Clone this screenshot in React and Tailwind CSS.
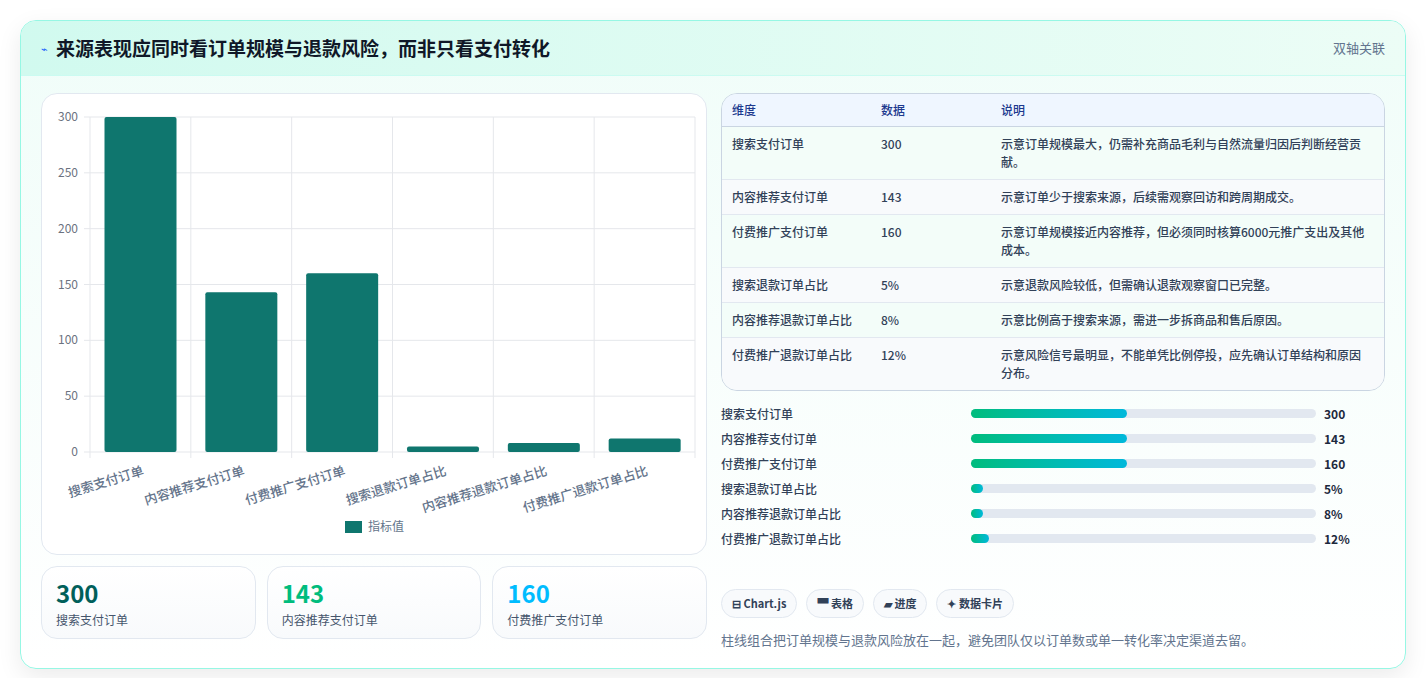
const rows = [
  ["搜索支付订单", "300", "示意订单规模最大，仍需补充商品毛利与自然流量归因后判断经营贡献。"],
  ["内容推荐支付订单", "143", "示意订单少于搜索来源，后续需观察回访和跨周期成交。"],
  ["付费推广支付订单", "160", "示意订单规模接近内容推荐，但必须同时核算6000元推广支出及其他成本。"],
  ["搜索退款订单占比", "5%", "示意退款风险较低，但需确认退款观察窗口已完整。"],
  ["内容推荐退款订单占比", "8%", "示意比例高于搜索来源，需进一步拆商品和售后原因。"],
  ["付费推广退款订单占比", "12%", "示意风险信号最明显，不能单凭比例停投，应先确认订单结构和原因分布。"],
];
const bars = [
  { label: "搜索支付订单", v: 300, w: 156 },
  { label: "内容推荐支付订单", v: 143, w: 156 },
  { label: "付费推广支付订单", v: 160, w: 156 },
  { label: "搜索退款订单占比", v: "5%", w: 12 },
  { label: "内容推荐退款订单占比", v: "8%", w: 12 },
  { label: "付费推广退款订单占比", v: "12%", w: 18 },
];
const values = [300, 143, 160, 5, 8, 12];

function Chart() {
  const x0 = 48, x1 = 653, y0 = 23, y1 = 358;
  const step = (x1 - x0) / 6;
  const sy = (v) => y1 - (v / 300) * (y1 - y0);
  return (
    <svg width="666" height="462" className="block">
      {[0, 50, 100, 150, 200, 250, 300].map((t) => (
        <g key={t}>
          <line x1={x0 - 6} x2={x1} y1={sy(t)} y2={sy(t)} stroke="#e5e7eb" />
          <text x={x0 - 12} y={sy(t) + 4} textAnchor="end" fontSize="12" fill="#6b7280">{t}</text>
        </g>
      ))}
      {[0, 1, 2, 3, 4, 5, 6].map((i) => (
        <line key={i} x1={x0 + i * step} x2={x0 + i * step} y1={y0} y2={y1 + 6} stroke="#e5e7eb" />
      ))}
      {values.map((v, i) => (
        <rect key={i} x={x0 + i * step + 14.5} y={sy(v)} width="72" height={y1 - sy(v)} rx="2" fill="#0f766e" />
      ))}
      {bars.map((b, i) => (
        <text key={i} fontSize="13" fontWeight="500" fill="#64748b" textAnchor="end"
          transform={`translate(${x0 + i * step + 52},${y1 + 14}) rotate(-17)`} dy="9">{b.label}</text>
      ))}
      <rect x="303" y="427" width="17" height="12" fill="#0f766e" />
      <text x="326" y="437" fontSize="12" fill="#64748b">指标值</text>
    </svg>
  );
}

export default function App() {
  return (
    <div className="min-h-screen bg-white p-5" style={{ fontFamily: '"Noto Sans CJK SC", "Noto Sans", sans-serif' }}>
      <div className="rounded-2xl border border-teal-200 bg-gradient-to-b from-[#f0fdf9] to-white shadow-[0_8px_24px_rgba(0,0,0,0.08)] overflow-hidden">
        <div className="h-[55px] flex items-center justify-between px-5 bg-gradient-to-r from-[#d1faef] to-[#ecfdf6] border-b border-teal-100">
          <div className="flex items-center gap-2">
            <span className="text-[11px] text-blue-600">⌁</span>
            <h1 className="text-[19px] font-bold text-gray-900">来源表现应同时看订单规模与退款风险，而非只看支付转化</h1>
          </div>
          <span className="text-[13px] text-slate-500">双轴关联</span>
        </div>
        <div className="flex gap-[14px] px-5 pt-[17px] pb-[18px]">
          <div className="w-[666px] flex flex-col gap-[11px]">
            <div className="h-[462px] rounded-2xl border border-slate-200 bg-white overflow-hidden">
              <Chart />
            </div>
            <div className="grid grid-cols-3 gap-[11px]">
              {[["300", "text-teal-800", "搜索支付订单"], ["143", "text-emerald-500", "内容推荐支付订单"], ["160", "text-sky-400", "付费推广支付订单"]].map(([n, c, l]) => (
                <div key={l} className="h-[73px] rounded-2xl border border-slate-200 bg-gradient-to-b from-white to-[#f8fafc] px-[14px] pt-[10px]">
                  <div className={`text-[24px] font-bold leading-[32px] ${c}`}>{n}</div>
                  <div className="text-[12px] text-slate-600 mt-[2px]">{l}</div>
                </div>
              ))}
            </div>
          </div>
          <div className="w-[666px] flex flex-col">
            <div className="rounded-2xl border border-slate-300 overflow-hidden text-[12px] font-medium text-slate-700">
              <div className="flex h-[33px] items-center bg-[#eff6ff] text-blue-900 border-b border-slate-300">
                <div className="w-[159px] pl-[10px]">维度</div>
                <div className="w-[120px]">数据</div>
                <div className="flex-1">说明</div>
              </div>
              {rows.map((r, i) => (
                <div key={i} className={`flex py-[8px] leading-[18px] border-b border-slate-200 last:border-b-0 ${i % 2 ? "bg-[#f8fafc]" : "bg-[#f3fdf9]"}`}>
                  <div className="w-[159px] pl-[10px]">{r[0]}</div>
                  <div className="w-[120px]">{r[1]}</div>
                  <div className="flex-1 pr-4">{r[2]}</div>
                </div>
              ))}
            </div>
            <div className="mt-[10px] flex flex-col">
              {bars.map((b) => (
                <div key={b.label} className="flex items-center h-[25px] text-[12px] font-medium text-slate-700">
                  <div className="w-[250px]">{b.label}</div>
                  <div className="w-[345px] h-[9px] rounded-full bg-slate-200">
                    <div className="h-full rounded-full bg-gradient-to-r from-emerald-500 to-cyan-500" style={{ width: b.w }} />
                  </div>
                  <div className="pl-2 font-bold text-slate-800">{b.v}</div>
                </div>
              ))}
            </div>
            <div className="mt-[38px] flex gap-[9px]">
              {["⊟ Chart.js", "▀ 表格", "▰ 进度", "✦ 数据卡片"].map((t) => (
                <span key={t} className="h-[29px] px-[10px] flex items-center rounded-full border border-slate-200 bg-slate-50 text-[11px] font-bold text-slate-700">{t}</span>
              ))}
            </div>
            <p className="mt-[12px] text-[13px] text-slate-500">柱线组合把订单规模与退款风险放在一起，避免团队仅以订单数或单一转化率决定渠道去留。</p>
          </div>
        </div>
      </div>
    </div>
  );
}
